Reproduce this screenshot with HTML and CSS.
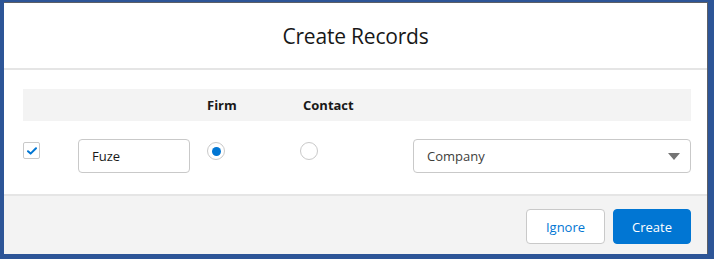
FILE: index.html
```html
<!DOCTYPE html>
<html lang="en">

<head>
    <meta charset="UTF-8">
    <meta name="viewport" content="width=device-width, initial-scale=1.0">
    <title>Create Records</title>
    <link rel="stylesheet" href="styles.css">
</head>

<body>

    <div class="modal">
        <div class="modal-header">
            <h2 class="title">Create Records</h2>
        </div>

        <div class="modal-body">
            <div class="grid-row head-row">
                <div></div>
                <div></div>
                <div class="col-label">Firm</div>
                <div class="col-label contact">Contact</div>
                <div></div>
            </div>

            <div class="grid-row data-row">
                <div class="checkbox checked">
                    <svg width="10" height="8" viewBox="0 0 10 8">
                        <path d="M1 4.2 L3.6 6.6 L9 1.2" fill="none" stroke="#0176d3" stroke-width="2" stroke-linecap="round" stroke-linejoin="round" />
                    </svg>
                </div>
                <div class="text-input">Fuze</div>
                <div class="radio checked"></div>
                <div class="radio"></div>
                <div class="select">
                    <span>Company</span>
                    <span class="arrow"></span>
                </div>
            </div>
        </div>

        <div class="modal-footer">
            <button class="btn btn-neutral">Ignore</button>
            <button class="btn btn-brand">Create</button>
        </div>
    </div>

</body>

</html>
```

FILE: styles.css
```css
* {
    box-sizing: border-box;
}

body {
    font-family: "Open Sans", "Noto Sans", Arial, sans-serif;
    margin: 0;
    padding: 2px 6px 5px 4px;
    height: 259px;
    background-color: #2d5597;
    color: #181818;
}

.modal {
    height: 100%;
    display: flex;
    flex-direction: column;
    background-color: white;
    border-top: 1px solid #5c5f66;
    border-right: 1px solid #5c5f66;
}

.modal-header {
    height: 67px;
    display: flex;
    justify-content: center;
    align-items: center;
    border-bottom: 2px solid #e5e5e5;
}

.modal-header .title {
    margin: 0;
    font-size: 21px;
    font-weight: normal;
    color: #181818;
    letter-spacing: -0.2px;
}

.modal-body {
    flex-grow: 1;
    padding: 19px 16px 0 19px;
}

.grid-row {
    display: grid;
    grid-template-columns: 55px 129px 93px 113px 1fr;
}

.head-row {
    height: 32px;
    background-color: #f3f3f3;
    align-items: center;
}

.col-label {
    font-size: 13px;
    font-weight: bold;
}

.col-label.contact {
    padding-left: 3px;
}

.data-row {
    padding-top: 18px;
    align-items: start;
}

.checkbox {
    width: 17px;
    height: 17px;
    margin-top: 3px;
    border: 1px solid #c9c9c9;
    border-radius: 2px;
    display: flex;
    justify-content: center;
    align-items: center;
}

.text-input {
    width: 112px;
    height: 34px;
    border: 1px solid #c9c9c9;
    border-radius: 4px;
    padding: 0 13px;
    display: flex;
    align-items: center;
    font-size: 13px;
    color: #181818;
}

.radio {
    width: 18px;
    height: 18px;
    margin-top: 3px;
    border: 1px solid #c9c9c9;
    border-radius: 50%;
    display: flex;
    justify-content: center;
    align-items: center;
}

.radio.checked::after {
    content: "";
    width: 9px;
    height: 9px;
    border-radius: 50%;
    background-color: #0176d3;
}

.select {
    height: 34px;
    border: 1px solid #c9c9c9;
    border-radius: 4px;
    padding: 0 10px 0 13px;
    display: flex;
    justify-content: space-between;
    align-items: center;
    font-size: 13px;
    color: #3e3e3c;
}

.select .arrow {
    width: 0;
    height: 0;
    border-left: 6px solid transparent;
    border-right: 6px solid transparent;
    border-top: 7px solid #747474;
    margin-top: 1px;
}

.modal-footer {
    height: 60px;
    border-top: 2px solid #e5e5e5;
    background-color: #f3f3f3;
    display: flex;
    justify-content: flex-end;
    align-items: flex-start;
    gap: 8px;
    padding: 13px 16px 0 0;
}

.btn {
    height: 35px;
    font-family: inherit;
    font-size: 13px;
    border-radius: 4px;
    cursor: pointer;
    padding: 0;
}

.btn-neutral {
    width: 79px;
    background-color: white;
    border: 1px solid #c9c9c9;
    color: #0176d3;
}

.btn-brand {
    width: 78px;
    background-color: #0176d3;
    border: 1px solid #0176d3;
    color: white;
}
```
